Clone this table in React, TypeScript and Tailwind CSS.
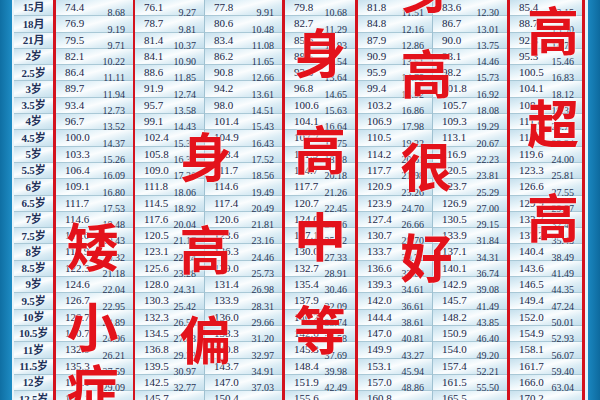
const raw = `15月 74.4 8.68 76.1 9.27 77.8 9.91 79.8 10.68 81.8 11.51 83.6 12.30 85.4 13.15
18月 76.9 9.19 78.7 9.81 80.6 10.48 82.7 11.29 84.8 12.16 86.7 13.01 88.7 13.90
21月 79.5 9.71 81.4 10.37 83.4 11.08 85.6 11.93 87.9 12.86 90.0 13.75 92.3 14.70
2岁 82.1 10.22 84.1 10.90 86.2 11.65 88.5 12.54 90.9 13.51 93.1 14.46 95.3 15.46
2.5岁 86.4 11.11 88.6 11.85 90.8 12.66 93.3 13.64 95.9 14.75 98.2 15.73 100.5 16.83
3岁 89.7 11.94 91.9 12.74 94.2 13.61 96.8 14.65 99.4 15.92 101.8 16.92 104.1 18.12
3.5岁 93.4 12.73 95.7 13.58 98.0 14.51 100.6 15.63 103.2 16.86 105.7 18.08 108.1 19.38
4岁 96.7 13.52 99.1 14.43 101.4 15.43 104.1 16.64 106.9 17.98 109.3 19.29 111.8 20.71
4.5岁 100.0 14.37 102.4 15.35 104.9 16.43 107.7 17.75 110.5 19.22 113.1 20.67 115.7 22.24
5岁 103.3 15.26 105.8 16.33 108.4 17.52 111.3 18.98 114.2 20.61 116.9 22.23 119.6 24.00
5.5岁 106.4 16.09 109.0 17.26 111.7 18.56 114.7 20.18 117.7 21.98 120.5 23.81 123.3 25.81
6岁 109.1 16.80 111.8 18.06 114.6 19.49 117.7 21.26 120.9 23.26 123.7 25.29 126.6 27.55
6.5岁 111.7 17.53 114.5 18.92 117.4 20.49 120.7 22.45 123.9 24.70 126.9 27.00 129.9 29.57
7岁 114.6 18.48 117.6 20.04 120.6 21.81 124.0 24.06 127.4 26.66 130.5 29.15 133.7 32.41
7.5岁 117.6 19.43 120.5 21.17 123.6 23.16 127.1 25.72 130.7 28.70 133.9 31.84 137.2 35.45
8岁 119.9 20.32 123.1 22.24 126.3 24.46 130.0 27.33 133.7 30.71 137.1 34.31 140.4 38.49
8.5岁 122.3 21.18 125.6 23.28 129.0 25.73 132.7 28.91 136.6 32.69 140.1 36.74 143.6 41.49
9岁 124.6 22.04 128.0 24.31 131.4 26.98 135.4 30.46 139.3 34.61 142.9 39.08 146.5 44.35
9.5岁 126.7 22.95 130.3 25.42 133.9 28.31 137.9 32.09 142.0 36.61 145.7 41.49 149.4 47.24
10岁 128.7 23.89 132.3 26.55 136.0 29.66 140.2 33.74 144.4 38.61 148.2 43.85 152.0 50.01
10.5岁 130.7 24.96 134.5 27.83 138.3 31.20 142.6 35.58 147.0 40.81 150.9 46.40 154.9 52.93
11岁 132.9 26.21 136.8 29.33 140.8 32.97 145.3 37.69 149.9 43.27 154.0 49.20 158.1 56.07
11.5岁 135.3 27.59 139.5 30.97 143.7 34.91 148.4 39.98 153.1 45.94 157.4 52.21 161.7 59.40
12岁 138.1 29.09 142.5 32.77 147.0 37.03 151.9 42.49 157.0 48.86 161.5 55.50 166.0 63.04
12.5岁 141.1 30.74 145.7 34.71 150.4 39.29 155.6 45.13 160.8 51.89 165.5 59.01 170.2 66.81`;

const rows = raw.split("\n").map((line) => line.trim().split(" "));

const cellBg =
  "bg-[linear-gradient(165deg,#c6e0ed_0%,#e6f3f9_30%,#fbfdfe_48%,#dcedf5_70%,#c4dfec_100%)]";

function DataColumn({ index, width, divider }: { index: number; width: string; divider?: boolean }) {
  return (
    <div className={`flex shrink-0 flex-col ${width} ${divider ? "border-r border-[#9fc1d1]" : ""}`}>
      {rows.map((r) => (
        <div
          key={r[0]}
          className={`flex h-[16.3px] shrink-0 items-start justify-between border-b border-[#a9c8d6] pl-[9px] pr-[8px] ${cellBg}`}
        >
          <span className="mt-[2px] text-[11px] leading-[10px] text-[#1b2748]">{r[1 + index * 2]}</span>
          <span className="translate-y-[2px] self-end text-[10px] leading-[8px] text-[#2a3656]">
            {r[2 + index * 2]}
          </span>
        </div>
      ))}
    </div>
  );
}

function Mark({ ch, top, shift = "" }: { ch: string; top: string; shift?: string }) {
  return (
    <div
      className={`pointer-events-none absolute left-0 right-0 text-center text-[52px] font-bold leading-none text-[#e3121b] [text-shadow:0_0_1px_#fff,0_0_2px_#fff] ${top} ${shift}`}
      style={{ fontFamily: '"Noto Sans CJK SC", sans-serif' }}
    >
      {ch}
    </div>
  );
}

export default function App() {
  return (
    <div
      className="flex h-[400px] w-[600px] overflow-hidden bg-white"
      style={{ fontFamily: '"Liberation Serif", "Noto Sans CJK SC", serif' }}
    >
      <div className="w-[12px] shrink-0 bg-[linear-gradient(90deg,#0f6fa3,#1e8cc4)]" />
      <div className="w-[2px] shrink-0 bg-[#e8f4fa]" />

      {/* age column */}
      <div className="flex w-[39px] shrink-0 flex-col">
        {rows.map((r) => (
          <div
            key={r[0]}
            className={`flex h-[16.3px] shrink-0 items-center justify-center border-b border-[#a9c8d6] text-[11px] font-bold tracking-[-0.2px] text-[#23335a] ${cellBg}`}
          >
            {r[0]}
          </div>
        ))}
      </div>

      {/* 矮小症 */}
      <div className="relative flex shrink-0 border-l-[3px] border-[#d3121d]">
        <DataColumn index={0} width="w-[77px]" />
        <Mark ch="矮" top="top-[219px]" shift="-translate-x-[2px]" />
        <Mark ch="小" top="top-[299px]" shift="-translate-x-[2px]" />
        <Mark ch="症" top="top-[361px]" shift="-translate-x-[2px]" />
      </div>

      {/* 身高偏 */}
      <div className="relative flex shrink-0 border-l-[2px] border-[#d3121d]">
        <DataColumn index={1} width="w-[70px]" divider />
        <DataColumn index={2} width="w-[77px]" />
        <Mark ch="身" top="top-[129px]" shift="-translate-x-[3px]" />
        <Mark ch="高" top="top-[222px]" shift="-translate-x-[3px]" />
        <Mark ch="偏" top="top-[312px]" shift="-translate-x-[3px]" />
      </div>

      {/* 身高中等 */}
      <div className="relative flex shrink-0 border-l-[3px] border-[#d3121d]">
        <DataColumn index={3} width="w-[70px]" />
        <Mark ch="身" top="top-[25px]" />
        <Mark ch="高" top="top-[122px]" />
        <Mark ch="中" top="top-[209px]" />
        <Mark ch="等" top="top-[302px]" />
      </div>

      {/* 身高很好 */}
      <div className="relative flex shrink-0 border-l-[3px] border-[#d3121d]">
        <DataColumn index={4} width="w-[75px]" divider />
        <DataColumn index={5} width="w-[74px]" />
        <Mark ch="身" top="top-[-40px]" shift="-translate-x-[6px]" />
        <Mark ch="高" top="top-[46px]" shift="-translate-x-[6px]" />
        <Mark ch="很" top="top-[139px]" shift="-translate-x-[6px]" />
        <Mark ch="好" top="top-[230px]" shift="-translate-x-[6px]" />
      </div>

      {/* 超高 */}
      <div className="relative flex shrink-0 border-x-[3px] border-[#d3121d]">
        <DataColumn index={6} width="w-[72px]" />
        <Mark ch="高" top="top-[3px]" shift="translate-x-[7px]" />
        <Mark ch="超" top="top-[96px]" shift="translate-x-[7px]" />
        <Mark ch="高" top="top-[190px]" shift="translate-x-[7px]" />
      </div>

      <div className="w-[3px] shrink-0 bg-[#e8f4fa]" />
      <div className="flex-1 bg-[linear-gradient(90deg,#1a86bf,#0e6a9e)]" />
    </div>
  );
}
